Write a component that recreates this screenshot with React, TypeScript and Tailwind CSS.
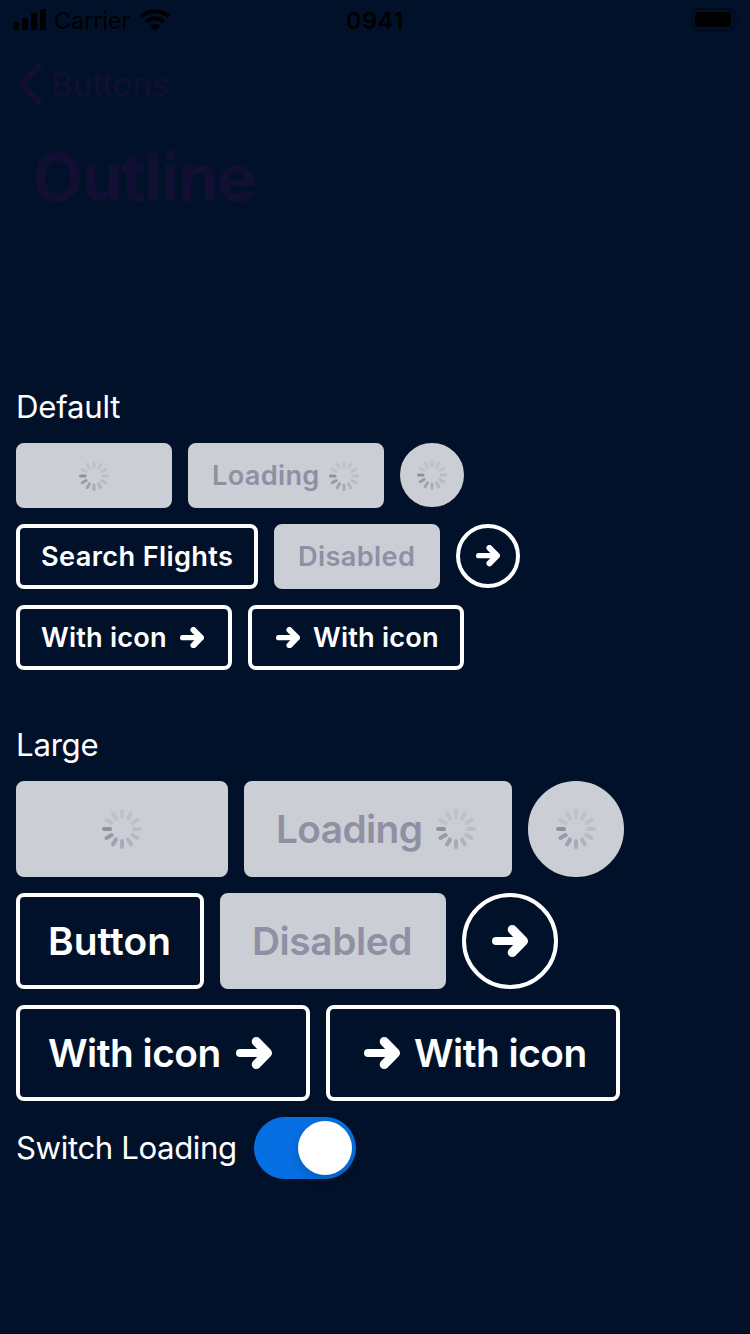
import type { ReactNode } from "react";

const SPOKES = [0.2, 0.2, 0.22, 0.26, 0.32, 0.42, 0.55, 0.7, 0.85, 1, 0.2, 0.2];

function Spinner({ className }: { className: string }) {
  return (
    <svg viewBox="0 0 40 40" className={className} aria-hidden="true">
      {SPOKES.map((opacity, i) => (
        <line
          key={i}
          x1="20"
          y1="2"
          x2="20"
          y2="8"
          stroke="#8f90a4"
          strokeWidth="4"
          strokeLinecap="round"
          opacity={opacity}
          transform={`rotate(${i * 30} 20 20)`}
        />
      ))}
    </svg>
  );
}

function Arrow({ className }: { className: string }) {
  return (
    <svg viewBox="0 0 36 32" className={className} fill="none" stroke="currentColor" strokeLinecap="round" strokeLinejoin="round" aria-hidden="true">
      <path d="M4 16H30" strokeWidth="8" />
      <path d="M20.200 4.500L31.500 16L20.200 27.500" strokeWidth="9" />
    </svg>
  );
}

type ButtonProps = { className: string; muted?: boolean; round?: boolean; label?: string; children?: ReactNode };

function Button({ className, muted, round, label, children }: ButtonProps) {
  const tone = muted ? "border-[#cbced4] bg-[#cbced4] text-[#8f90a4]" : "border-white text-white";
  const shape = round ? "rounded-full" : "rounded-lg";
  return (
    <button type="button" disabled={muted} aria-label={label} className={`flex shrink-0 items-center whitespace-nowrap border-4 font-semibold ${tone} ${shape} ${className}`}>
      {children}
    </button>
  );
}

function StatusBar() {
  return (
    <div className="grid h-[41px] grid-cols-[346px_1fr_auto] items-center pr-[10px] text-[23.3px] leading-none text-black">
      <div className="flex items-center pl-[13px]">
        <svg viewBox="0 0 33 21" className="mb-[2px] h-[21px] w-[33px]" aria-hidden="true">
          <rect x="0" y="13" width="6" height="8" rx="1.5" />
          <rect x="9" y="9" width="6" height="12" rx="1.5" />
          <rect x="18" y="4" width="6" height="17" rx="1.5" />
          <rect x="27" y="0" width="6" height="21" rx="1.5" />
        </svg>
        <span className="ml-[8px] w-[77px]">Carrier</span>
        <svg viewBox="0 0 30 22" className="ml-[9px] h-[22px] w-[30px]" aria-hidden="true">
          <path d="M1.3 7.6A19.9 19.9 0 0 1 28.7 7.6M6.2 12.8A12.7 12.7 0 0 1 23.8 12.8" fill="none" stroke="black" strokeWidth="4" />
          <path d="M15 22L10 17A7.2 7.2 0 0 1 20 17Z" />
        </svg>
      </div>
      <span className="font-semibold tracking-[0.8px]">0941</span>
      <svg viewBox="0 0 49 23" className="mb-[2px] h-[23px] w-[49px]" aria-hidden="true">
        <rect x="1" y="1" width="42" height="21" rx="5.5" fill="none" stroke="#010b1c" strokeWidth="2" />
        <rect x="4" y="4" width="36" height="15" rx="3" />
        <path d="M46 8C48.600 9 48.600 14 46 15Z" fill="#010b1c" />
      </svg>
    </div>
  );
}

export default function App() {
  return (
    <main className="flex h-[1334px] w-[750px] flex-col overflow-hidden border-b border-black bg-[#01112a] font-['Inter','Liberation_Sans',sans-serif] leading-none text-white">
      <StatusBar />
      <nav className="flex h-[87px] items-center pl-[17px] text-[#120f35]">
        <svg viewBox="0 0 26 42" className="mb-[1px] h-[42px] w-[26px]" fill="none" stroke="currentColor" strokeWidth="5.6" strokeLinecap="round" aria-hidden="true">
          <path d="M22.300 3L4.400 21L22.300 39" />
        </svg>
        <span className="ml-[8px] text-[33px]">Buttons</span>
      </nav>
      <h1 className="flex h-[96px] items-center pl-[32px] pt-[1px] text-[66px] font-[650] tracking-[-1.3px] text-[#120f35]">Outline</h1>

      <section className="mt-[163px] flex flex-col gap-4 pl-4">
        <h2 className="flex h-10 items-center pt-[2px] text-[31.2px] tracking-[-0.25px]">Default</h2>
        <div className="flex gap-4 text-[27.2px]">
          <Button muted label="Loading" className="h-[65px] w-[156px] justify-center">
            <Spinner className="size-[30px]" />
          </Button>
          <Button muted className="h-[65px] w-[196px] justify-between pl-[20px] pr-[21px]">
            <span className="tracking-[0.3px]">Loading</span>
            <Spinner className="size-[30px]" />
          </Button>
          <Button muted round label="Loading" className="size-16 justify-center">
            <Spinner className="size-[30px]" />
          </Button>
        </div>
        <div className="flex gap-4 text-[27.2px]">
          <Button className="h-[65px] w-[242px] pl-[21px] tracking-[0.36px]">Search Flights</Button>
          <Button muted className="h-[65px] w-[166px] pl-[20px] tracking-[0.36px]">Disabled</Button>
          <Button round label="Next" className="size-16 justify-center">
            <Arrow className="h-[21.3px] w-[24px]" />
          </Button>
        </div>
        <div className="flex gap-4 text-[27.2px]">
          <Button className="h-[65px] w-[216px] justify-between pl-[21px] pr-[24px]">
            <span className="tracking-[0.2px]">With icon</span>
            <Arrow className="h-[21.3px] w-[24px]" />
          </Button>
          <Button className="h-[65px] w-[216px] gap-[13px] pl-[24px]">
            <Arrow className="h-[21.3px] w-[24px]" />
            <span className="tracking-[0.2px]">With icon</span>
          </Button>
        </div>
      </section>

      <section className="mt-[55px] flex flex-col gap-4 pl-4">
        <h2 className="flex h-10 items-center pt-[2px] text-[31.2px] tracking-[-0.25px]">Large</h2>
        <div className="flex gap-4 text-[38.8px]">
          <Button muted label="Loading" className="h-24 w-[212px] justify-center">
            <Spinner className="size-10" />
          </Button>
          <Button muted className="h-24 w-[268px] justify-between pl-[28px] pr-[32px]">
            <span className="tracking-[-0.6px]">Loading</span>
            <Spinner className="size-10" />
          </Button>
          <Button muted round label="Loading" className="size-24 justify-center">
            <Spinner className="size-10" />
          </Button>
        </div>
        <div className="flex gap-4 text-[38.8px]">
          <Button className="h-24 w-[188px] pl-[28px] tracking-[0.1px]">Button</Button>
          <Button muted className="h-24 w-[226px] pl-[28px] tracking-[-0.4px]">Disabled</Button>
          <Button round label="Next" className="size-24 justify-center">
            <Arrow className="h-8 w-9" />
          </Button>
        </div>
        <div className="flex gap-4 text-[38.8px]">
          <Button className="h-24 w-[294px] justify-between pl-[28px] pr-[34px]">
            <span className="tracking-[-0.5px]">With icon</span>
            <Arrow className="h-8 w-9" />
          </Button>
          <Button className="h-24 w-[294px] gap-[14px] pl-[34px]">
            <Arrow className="h-8 w-9" />
            <span className="tracking-[-0.5px]">With icon</span>
          </Button>
        </div>
        <div className="flex h-[62px] items-center">
          <span className="w-[238px] whitespace-nowrap pt-[2px] text-[31.2px] tracking-[-0.4px]">Switch Loading</span>
          <button type="button" role="switch" aria-checked="true" aria-label="Switch Loading" className="flex h-[62px] w-[102px] items-center justify-end rounded-full bg-[#0670e3] pr-1">
            <span className="size-[54px] rounded-full bg-white shadow-[0_4px_12px_rgba(0,0,0,0.2)]" />
          </button>
        </div>
      </section>
    </main>
  );
}
